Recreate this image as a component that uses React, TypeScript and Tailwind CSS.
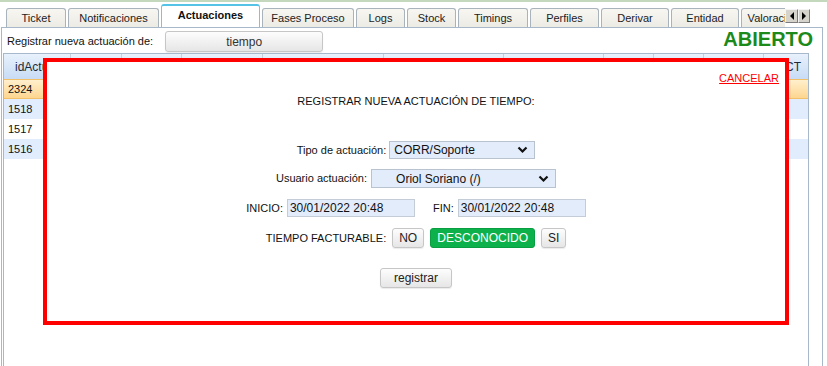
import React from 'react';

const tabs: { label: string; w: string; active?: boolean }[] = [
  { label: 'Ticket', w: 'w-[60px]' },
  { label: 'Notificaciones', w: 'w-[91px]' },
  { label: 'Actuaciones', w: 'w-[99px]', active: true },
  { label: 'Fases Proceso', w: 'w-[92px]' },
  { label: 'Logs', w: 'w-[49px]' },
  { label: 'Stock', w: 'w-[49px]' },
  { label: 'Timings', w: 'w-[70px]' },
  { label: 'Perfiles', w: 'w-[69px]' },
  { label: 'Derivar', w: 'w-[68px]' },
  { label: 'Entidad', w: 'w-[68px]' },
  { label: 'Valoraciones', w: 'w-[76px]' },
];

// header columns of the actuaciones grid
const columns: { label: string; w: string }[] = [
  { label: 'idActuación', w: 'w-[67px]' },
  { label: 'Tipo', w: 'w-[51px]' },
  { label: 'Usuario', w: 'w-[60px]' },
  { label: 'Inicio', w: 'w-[81px]' },
  { label: 'Fin', w: 'w-[121px]' },
  { label: 'Descripción', w: 'w-[120px]' },
  { label: 'Estado', w: 'w-[100px]' },
  { label: 'Min', w: 'w-[50px]' },
  { label: 'Fact', w: 'w-[50px]' },
  { label: 'Coste', w: 'w-[60px]' },
  { label: 'FACT', w: 'flex-1' },
];

const rows = [
  { id: '2324', bg: 'bg-gradient-to-b from-[#ffefcc] to-[#fdd690] border-y border-[#f3c06a]' },
  { id: '1518', bg: 'bg-[#e1ecfc]' },
  { id: '1517', bg: 'bg-white' },
  { id: '1516', bg: 'bg-[#e1ecfc]' },
];

const Chevron = () => (
  <svg width="11" height="8" viewBox="0 0 11 8" className="shrink-0">
    <path d="M1.5 1.5 L5.5 5.5 L9.5 1.5" fill="none" stroke="#111" strokeWidth="2.2" />
  </svg>
);

const GrayButton: React.FC<{ className?: string; children: React.ReactNode }> = ({ className = '', children }) => (
  <div
    className={`flex h-[20px] items-center justify-center rounded-[3px] border border-[#c6c6c6] bg-gradient-to-b from-[#fdfdfd] to-[#e6e6e6] text-[12px] text-[#222] shadow-[0_1px_1px_rgba(0,0,0,0.08)] ${className}`}
  >
    {children}
  </div>
);

export default function App() {
  return (
    <div className="relative h-[366px] w-[827px] overflow-hidden bg-white font-['Liberation_Sans',Arial,sans-serif] text-[#111]">
      <div className="h-[2px] bg-[#c4d8bd]" />

      {/* tab strip */}
      <div className="flex h-[25px] items-end">
        <div className="flex w-[785px] items-end gap-[2px] overflow-hidden pl-[6px]">
          {tabs.map((t) =>
            t.active ? (
              <div
                key={t.label}
                className={`${t.w} relative z-10 -mb-px flex h-[24px] shrink-0 items-center justify-center rounded-t-[3px] border-x border-t-2 border-x-[#a9b3bc] border-t-[#55c3e6] bg-white pb-[3px] text-[11px] font-bold`}
              >
                {t.label}
              </div>
            ) : (
              <div
                key={t.label}
                className={`${t.w} flex h-[19px] shrink-0 items-center justify-center whitespace-nowrap rounded-t-[3px] border-x border-t border-[#a9b3bc] bg-gradient-to-b from-[#f7f6f1] to-[#ecebe4] text-[11px] text-[#222]`}
              >
                {t.label}
              </div>
            ),
          )}
        </div>
        <div className="mb-[4px] flex self-end">
          <div className="flex h-[14px] w-[13px] items-center justify-center border border-t-[#f4f4f4] border-l-[#f4f4f4] border-r-[#7d7d7d] border-b-[#7d7d7d] bg-[#d6d3cc]">
            <div className="h-0 w-0 border-y-[4px] border-r-[4px] border-y-transparent border-r-black" />
          </div>
          <div className="flex h-[14px] w-[12px] items-center justify-center border border-t-[#f4f4f4] border-l-[#f4f4f4] border-r-[#7d7d7d] border-b-[#7d7d7d] bg-[#d6d3cc]">
            <div className="h-0 w-0 border-y-[4px] border-l-[4px] border-y-transparent border-l-black" />
          </div>
        </div>
      </div>

      {/* panel */}
      <div className="ml-[1px] flex h-[339px] w-[822px] flex-col border-x border-t border-[#a6b8c9]">
        <div className="flex h-[25px] pl-[5px] pr-[9px]">
          <div className="mt-[3px] flex h-[21px] items-center text-[11px]">Registrar nueva actuación de:</div>
          <GrayButton className="ml-[12px] mt-[3px] h-[21px] w-[158px] text-[#333]">tiempo</GrayButton>
          <div className="ml-auto text-[20px] font-bold leading-[23px] text-[#1b8a1b]">ABIERTO</div>
        </div>

        {/* grid */}
        <div className="ml-[1px] flex w-[806px] flex-1 flex-col border-x border-t border-[#a6b8c9]">
          <div className="flex h-[25px] bg-gradient-to-b from-[#e8f1fc] to-[#c8dcf5]">
            {columns.map((c, i) => (
              <div
                key={c.label}
                className={`${c.w} flex items-center overflow-hidden whitespace-nowrap text-[12px] text-[#1d2a3a] ${i === 0 ? 'pl-[11px]' : 'justify-end pr-[7px]'} ${i < columns.length - 1 ? 'border-r border-[#c3d0dd]' : ''}`}
              >
                {c.label}
              </div>
            ))}
          </div>
          {rows.map((r) => (
            <div key={r.id} className={`flex h-[20px] items-center pl-[4px] text-[11px] ${r.bg}`}>
              {r.id}
            </div>
          ))}
        </div>
      </div>

      {/* registrar actuacion dialog */}
      <div className="absolute left-[43px] top-[58px] flex h-[267px] w-[746px] flex-col items-center border-4 border-[#ff0000] bg-white">
        <div className="mt-[9px] flex h-[14px] w-full justify-end pr-[6px]">
          <span className="text-[11px] leading-[14px] text-[#ff0000] underline">CANCELAR</span>
        </div>
        <div className="mt-[9px] h-[14px] text-[11px] leading-[14px]">REGISTRAR NUEVA ACTUACIÓN DE TIEMPO:</div>

        <div className="mt-[33px] flex h-[18px] items-center gap-[3px]">
          <span className="text-[11px]">Tipo de actuación:</span>
          <div className="flex h-[18px] w-[146px] items-center justify-between border border-[#b9c3cf] bg-[#e3ecfb] pl-[4px] pr-[6px] text-[12px]">
            CORR/Soporte
            <Chevron />
          </div>
        </div>

        <div className="mt-[10px] flex h-[19px] items-center gap-[4px]">
          <span className="text-[11px]">Usuario actuación:</span>
          <div className="flex h-[19px] w-[185px] items-center justify-between border border-[#b9c3cf] bg-[#e3ecfb] pl-[24px] pr-[6px] text-[12px]">
            Oriol Soriano (/)
            <Chevron />
          </div>
        </div>

        <div className="mt-[11px] flex h-[18px] items-center">
          <span className="mr-[4px] text-[11px]">INICIO:</span>
          <div className="flex h-[18px] w-[128px] items-center border border-[#c4ccd7] bg-[#e3ecfb] pl-[2px] text-[12px]">
            30/01/2022 20:48
          </div>
          <span className="ml-[18px] mr-[4px] text-[11px]">FIN:</span>
          <div className="flex h-[18px] w-[128px] items-center border border-[#c4ccd7] bg-[#e3ecfb] pl-[2px] text-[12px]">
            30/01/2022 20:48
          </div>
        </div>

        <div className="mt-[11px] flex h-[20px] items-center gap-[6px]">
          <span className="text-[11px]">TIEMPO FACTURABLE:</span>
          <GrayButton className="w-[32px]">NO</GrayButton>
          <div className="flex h-[20px] w-[105px] items-center justify-center rounded-[3px] border border-[#0a9e42] bg-[#0db14b] text-[12px] text-white">
            DESCONOCIDO
          </div>
          <GrayButton className="w-[25px]">SI</GrayButton>
        </div>

        <GrayButton className="mt-[20px] w-[72px]">registrar</GrayButton>
      </div>
    </div>
  );
}
